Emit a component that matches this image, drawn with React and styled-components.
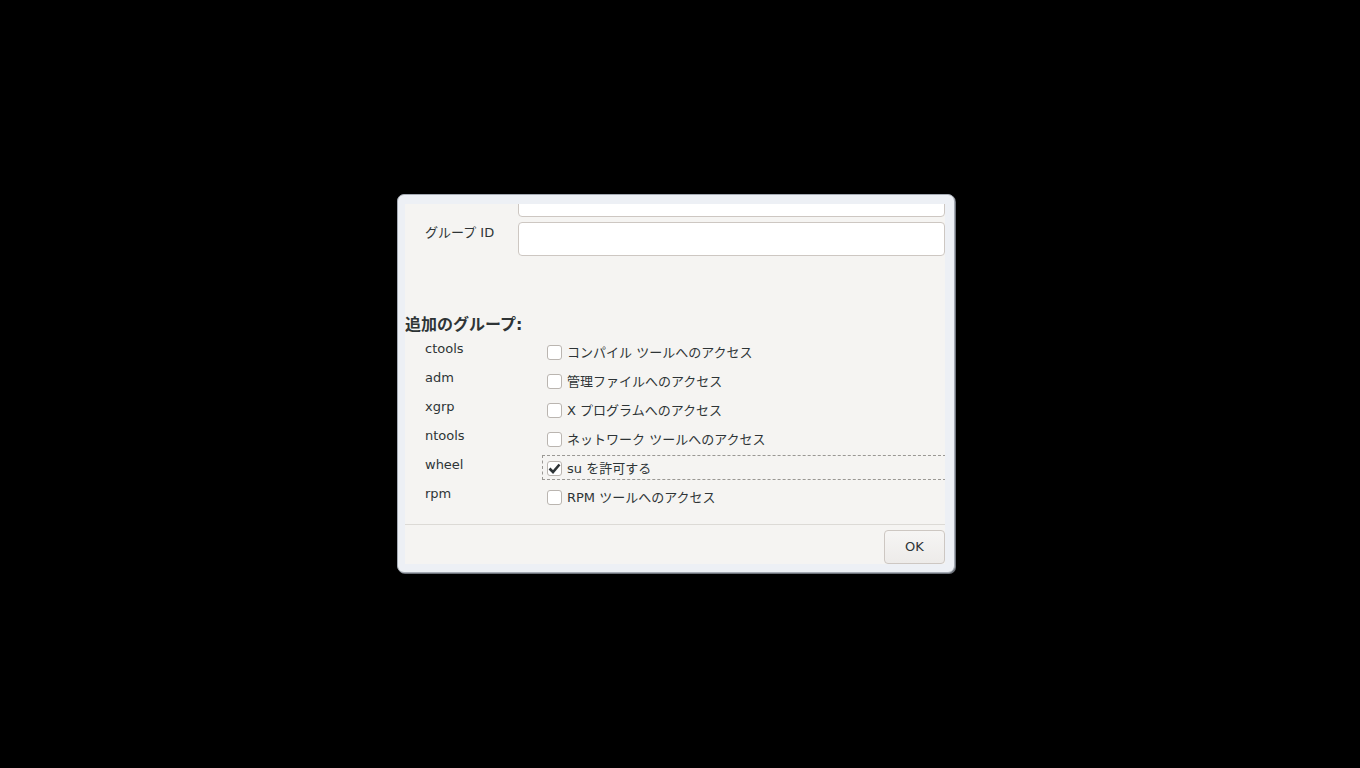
import React from "react";
import styled, { createGlobalStyle } from "styled-components";

const Global = createGlobalStyle`
  html, body { margin: 0; padding: 0; background: #000; }
  body { font-family: "DejaVu Sans", "Noto Sans CJK JP", sans-serif; }
  * { box-sizing: border-box; }
`;

const Screen = styled.div`
  width: 1360px;
  height: 768px;
  background: #000;
  padding: 194px 0 0 397px;
`;

const Window = styled.div`
  width: 558px;
  height: 379px;
  background: #edf0f5;
  border: 1px solid #a4aab3;
  border-radius: 7px;
  padding: 9px 9px 8px 7px;
  box-shadow: 1px 1px 0 #6d727a;
`;

const Content = styled.div`
  width: 540px;
  height: 360px;
  background: #f5f4f2;
  display: flex;
  flex-direction: column;
  color: #2e3436;
  font-size: 13px;
`;

const ScrollArea = styled.div`
  flex: 1;
  overflow: hidden;
`;

const Form = styled.div`
  margin-top: -21px;
  display: flex;
  flex-direction: column;
`;

const FieldRow = styled.div`
  display: grid;
  grid-template-columns: 93px 1fr;
  padding-left: 20px;
  margin-bottom: ${(p) => p.$gap || 0}px;
`;

const FieldLabel = styled.div`
  padding-top: 3px;
  line-height: 16px;
  white-space: nowrap;
`;

const TextInput = styled.div`
  height: 34px;
  background: #fff;
  border: 1px solid #cdc7c2;
  border-radius: 4px;
`;

const Heading = styled.div`
  margin-top: 59px;
  font-weight: bold;
  font-size: 16px;
  line-height: 20px;
  height: 20px;
  margin-bottom: 4px;
`;

const GroupList = styled.div`
  display: flex;
  flex-direction: column;
  gap: 4px;
`;

const GroupRow = styled.div`
  display: grid;
  grid-template-columns: 117px 1fr;
  padding-left: 20px;
  height: 25px;
`;

const GroupName = styled.div`
  line-height: 16px;
  padding-top: 2px;
`;

const CheckWidget = styled.div`
  display: flex;
  align-items: center;
  gap: 5px;
  padding-left: 4px;
  margin-right: -1px;
  border: 1px ${(p) => (p.$focus ? "dashed #9a9894" : "solid transparent")};
  height: 25px;
  padding-top: 2px;
`;

const Box = styled.div`
  width: 15px;
  height: 15px;
  background: #fff;
  border: 1px solid #bab5b0;
  border-radius: 3px;
  display: flex;
  align-items: center;
  justify-content: center;
  flex: none;
`;

const CheckText = styled.span`
  line-height: 16px;
  white-space: nowrap;
  padding-top: 1px;
`;

const Footer = styled.div`
  border-top: 1px solid #dcdad6;
  padding-top: 5px;
  display: flex;
  justify-content: flex-end;
`;

const Button = styled.div`
  width: 61px;
  height: 34px;
  border: 1px solid #cdc7c2;
  border-radius: 4px;
  background: linear-gradient(#f6f5f4, #edebe9);
  display: flex;
  align-items: center;
  justify-content: center;
  padding-bottom: 2px;
  font-size: 13px;
  color: #2e3436;
`;

const groups = [
  ["ctools", "コンパイル ツールへのアクセス", false],
  ["adm", "管理ファイルへのアクセス", false],
  ["xgrp", "X プログラムへのアクセス", false],
  ["ntools", "ネットワーク ツールへのアクセス", false],
  ["wheel", "su を許可する", true],
  ["rpm", "RPM ツールへのアクセス", false],
];

const Check = () => (
  <svg width="13" height="11" viewBox="0 0 13 11">
    <path d="M1.5 5.5 L5 9 L11.5 1.5" fill="none" stroke="#2e3436" strokeWidth="2.6" strokeLinejoin="miter" />
  </svg>
);

export default function App() {
  return (
    <>
      <Global />
      <Screen>
        <Window>
          <Content>
            <ScrollArea>
              <Form>
                <FieldRow $gap={5}>
                  <FieldLabel></FieldLabel>
                  <TextInput />
                </FieldRow>
                <FieldRow>
                  <FieldLabel>グループ ID</FieldLabel>
                  <TextInput />
                </FieldRow>
                <Heading>追加のグループ:</Heading>
                <GroupList>
                  {groups.map(([name, text, checked]) => (
                    <GroupRow key={name}>
                      <GroupName>{name}</GroupName>
                      <CheckWidget $focus={checked}>
                        <Box>{checked && <Check />}</Box>
                        <CheckText>{text}</CheckText>
                      </CheckWidget>
                    </GroupRow>
                  ))}
                </GroupList>
              </Form>
            </ScrollArea>
            <Footer>
              <Button>OK</Button>
            </Footer>
          </Content>
        </Window>
      </Screen>
    </>
  );
}
